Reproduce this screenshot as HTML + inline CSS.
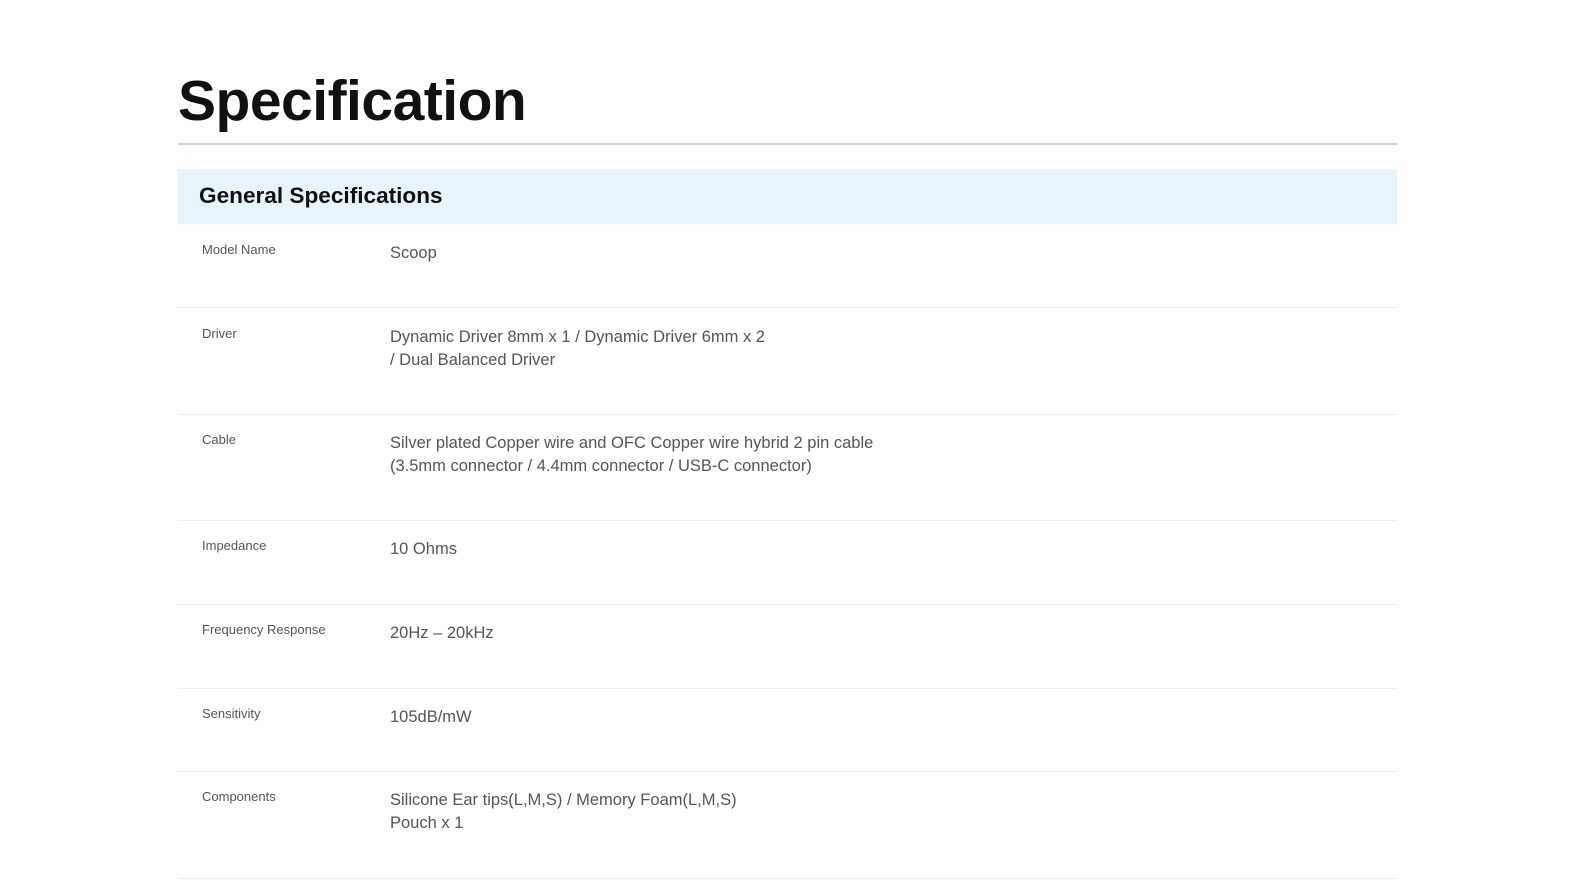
<!DOCTYPE html>
<html><head><style>
body{margin:0;background:#fff;font-family:"Liberation Sans",sans-serif;width:1575px;height:880px;overflow:hidden;position:relative}
h1{position:absolute;left:178px;top:63px;margin:0;font-size:57px;font-weight:700;color:#111;letter-spacing:-0.5px;line-height:76px}
.hr{position:absolute;left:178px;width:1219px;top:143px;height:2px;background:#cfcfcf}
.band{position:absolute;left:178px;width:1219px;top:169px;height:55px;background:#e8f4fc}
.band span{position:absolute;left:21px;top:14px;font-size:22.6px;font-weight:700;color:#111}
.row{position:absolute;left:178px;width:1219px;border-bottom:1px solid #eee}
.l{position:absolute;left:24px;top:18px;font-size:13px;color:#555}
.v{position:absolute;left:212px;top:18px;font-size:16.5px;color:#555;line-height:23px}
</style></head><body>
<h1>Specification</h1>
<div class="hr"></div>
<div class="band"><span>General Specifications</span></div>
<div class="row" style="top:224px;height:83px"><div class="l">Model Name</div><div class="v">Scoop</div></div>
<div class="row" style="top:308px;height:106px"><div class="l">Driver</div><div class="v">Dynamic Driver 8mm x 1 / Dynamic Driver 6mm x 2<br>/ Dual Balanced Driver</div></div>
<div class="row" style="top:414px;height:106px"><div class="l">Cable</div><div class="v">Silver plated Copper wire and OFC Copper wire hybrid 2 pin cable<br>(3.5mm connector / 4.4mm connector / USB-C connector)</div></div>
<div class="row" style="top:520px;height:84px"><div class="l">Impedance</div><div class="v">10 Ohms</div></div>
<div class="row" style="top:604px;height:84px"><div class="l">Frequency Response</div><div class="v">20Hz – 20kHz</div></div>
<div class="row" style="top:688px;height:83px"><div class="l">Sensitivity</div><div class="v">105dB/mW</div></div>
<div class="row" style="top:771px;height:107px"><div class="l">Components</div><div class="v">Silicone Ear tips(L,M,S) / Memory Foam(L,M,S)<br>Pouch x 1</div></div>
</body></html>
